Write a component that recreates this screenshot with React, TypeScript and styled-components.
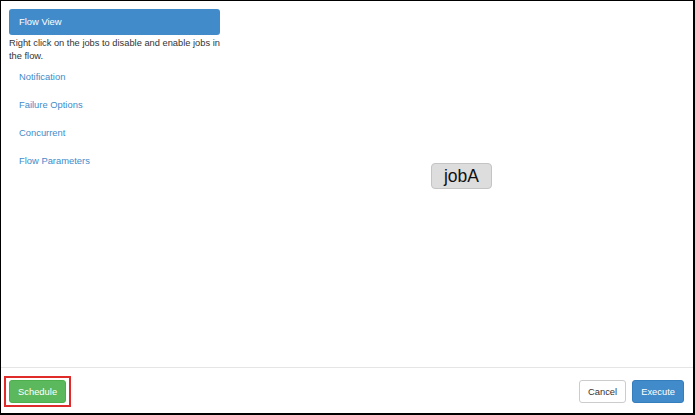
import styled, { createGlobalStyle } from 'styled-components';

const GlobalStyle = createGlobalStyle`
  html, body {
    margin: 0;
    padding: 0;
    background: #fff;
  }
  body {
    font-family: "Liberation Sans", Arial, sans-serif;
    color: #333;
  }
`;

const Frame = styled.div`
  box-sizing: border-box;
  width: 695px;
  height: 415px;
  border: 1px solid #000;
  border-right-width: 2px;
  border-bottom-width: 2px;
  display: flex;
  flex-direction: column;
  background: #fff;
`;

const Body = styled.div`
  flex: 1;
  display: flex;
  padding: 8px 0 0 8px;
  min-height: 0;
`;

const Sidebar = styled.div`
  width: 211px;
  flex-shrink: 0;
  display: flex;
  flex-direction: column;
`;

const ActiveTab = styled.div`
  height: 26px;
  background: #428bca;
  border-radius: 3px;
  color: #fff;
  font-size: 9.4px;
  line-height: 26px;
  padding-left: 10px;
`;

const Help = styled.p`
  margin: 2px -3px 0 0;
  font-size: 9.3px;
  line-height: 13px;
  color: #333;
`;

const NavList = styled.div`
  display: flex;
  flex-direction: column;
  margin-top: 7px;
`;

const NavLink = styled.a`
  display: block;
  height: 28px;
  line-height: 14px;
  padding-left: 10px;
  font-size: 9.4px;
  color: #428bca;
  text-decoration: none;
`;

const Canvas = styled.div`
  flex: 1;
  display: flex;
  align-items: flex-start;
  justify-content: center;
  padding: 154px 0 0 10px;
`;

const JobNode = styled.div`
  box-sizing: border-box;
  width: 61px;
  height: 26px;
  background: #ddd;
  border: 1px solid #c4c4c4;
  border-radius: 4px;
  font-size: 17.5px;
  line-height: 24px;
  text-align: center;
  color: #111;
`;

const Footer = styled.div`
  height: 46px;
  box-sizing: border-box;
  border-top: 1px solid #e5e5e5;
  display: flex;
  align-items: flex-start;
  padding: 8px 9px 0 3px;
`;

const Highlight = styled.div`
  border: 2px solid #e02b2b;
  padding: 2px 3px;
  display: flex;
`;

const Spacer = styled.div`
  flex: 1;
`;

const Actions = styled.div`
  display: flex;
  gap: 6px;
  padding-top: 4px;
`;

const Button = styled.button<{ $variant: 'success' | 'default' | 'primary' }>`
  box-sizing: border-box;
  height: 23px;
  padding: 0 8px;
  font-family: "Liberation Sans", Arial, sans-serif;
  font-size: 9.4px;
  border-radius: 3px;
  border: 1px solid
    ${(p) => (p.$variant === 'success' ? '#4cae4c' : p.$variant === 'primary' ? '#357ebd' : '#ccc')};
  background: ${(p) => (p.$variant === 'success' ? '#5cb85c' : p.$variant === 'primary' ? '#428bca' : '#fff')};
  color: ${(p) => (p.$variant === 'default' ? '#333' : '#fff')};
  cursor: pointer;
`;

export default function App() {
  return (
    <>
      <GlobalStyle />
      <Frame>
        <Body>
          <Sidebar>
            <ActiveTab>Flow View</ActiveTab>
            <Help>Right click on the jobs to disable and enable jobs in the flow.</Help>
            <NavList>
              <NavLink href="#">Notification</NavLink>
              <NavLink href="#">Failure Options</NavLink>
              <NavLink href="#">Concurrent</NavLink>
              <NavLink href="#">Flow Parameters</NavLink>
            </NavList>
          </Sidebar>
          <Canvas>
            <JobNode>jobA</JobNode>
          </Canvas>
        </Body>
        <Footer>
          <Highlight>
            <Button $variant="success">Schedule</Button>
          </Highlight>
          <Spacer />
          <Actions>
            <Button $variant="default">Cancel</Button>
            <Button $variant="primary">Execute</Button>
          </Actions>
        </Footer>
      </Frame>
    </>
  );
}
